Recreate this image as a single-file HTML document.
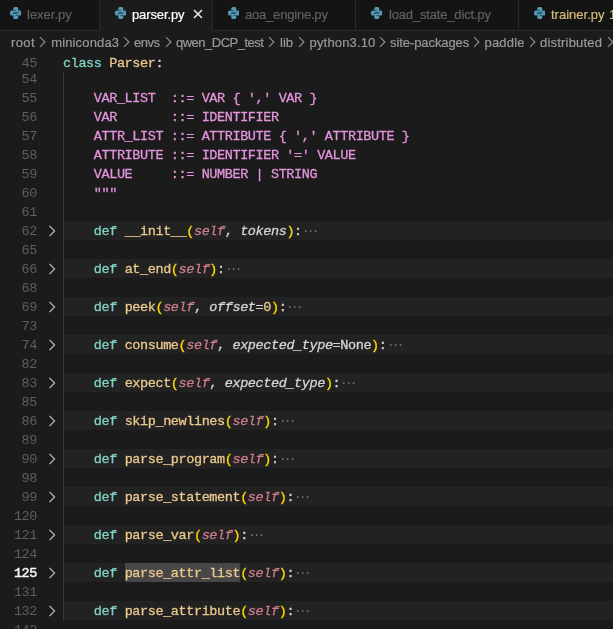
<!DOCTYPE html>
<html><head><meta charset="utf-8">
<style>
html,body{margin:0;padding:0}
body{width:613px;height:629px;overflow:hidden;position:relative;background:#1b1b1b;font-family:"Liberation Sans",sans-serif}
.a{position:absolute;white-space:pre}
#tabs{position:absolute;left:0;top:0;width:613px;height:30px;background:#141414;border-bottom:1px solid #2a2a2a}
.tab{position:absolute;top:0;height:30px;background:#141414;border-right:1px solid #2a2a2a}
.tab.act{background:#1b1b1b;height:31px}
.tl{-webkit-text-stroke:0.2px currentColor;position:absolute;top:7px;font-size:13px;line-height:16px;color:#606060;white-space:pre}
.act .tl{color:#ffffff}
.ic{position:absolute;top:7px;width:11.5px;height:12px}
.bc{-webkit-text-stroke:0.2px currentColor;position:absolute;top:35px;font-size:13px;line-height:16px;color:#999999;white-space:pre}
.sep{position:absolute;top:36px;width:7px;height:12px}
.ln{margin-top:1px;position:absolute;left:0;width:37px;text-align:right;font-family:"Liberation Mono",monospace;font-size:13.5px;line-height:19px;color:#5e5e5e;letter-spacing:-0.4px}
.code{margin-top:1px;-webkit-text-stroke:0.3px currentColor;position:absolute;left:63px;font-family:"Liberation Mono",monospace;font-size:13.5px;line-height:19px;color:#d4d4d4;white-space:pre;letter-spacing:-0.4px}
.fold{position:absolute;left:63px;width:550px;height:19px;background:#222222}
.chev{position:absolute;left:48px;width:8px;height:19px}
.k{color:#80d3c3}
.f{color:#ebc88d}
.s{color:#e394dc}
.sl{color:#cc7c8a;font-style:italic}
.p{color:#d4d4d4;font-style:italic}
.b{color:#ffd700}
.n{color:#ebc88d}
.e{color:#8b8b8b}
.dots{display:inline-block;width:16px;height:19px;vertical-align:top;fill:#8e8e8e}
.hl{background:#3a3a3a}
.ln.act{color:#f4f4f4;-webkit-text-stroke:0.5px #f4f4f4}
</style></head>
<body>
<div id="root" style="position:absolute;left:0;top:0;width:613px;height:629px;will-change:transform">
<div id="tabs">
  <div class="tab" style="left:-5px;width:104px">
    <svg class="ic" style="left:14.7px" viewBox="0 0 12 12" preserveAspectRatio="none"><g fill="#519aba">
      <path d="M5 0H7Q8.6 0 8.6 1.6V4.4Q8.6 5.6 7.4 5.6H4.6Q3.4 5.6 3.4 6.8V8.6H1.9Q0 8.6 0 6.7V5.3Q0 3.4 1.9 3.4H6.2V3H3.4V1.6Q3.4 0 5 0Z"/>
      <path d="M7 12H5Q3.4 12 3.4 10.4V7.6Q3.4 6.4 4.6 6.4H7.4Q8.6 6.4 8.6 5.2V3.4H10.1Q12 3.4 12 5.3V6.7Q12 8.6 10.1 8.6H5.8V9H8.6V10.4Q8.6 12 7 12Z"/>
    </g></svg>
    <div class="tl" style="left:32px">lexer.py</div>
  </div>
  <div class="tab act" style="left:100px;width:112px">
    <svg class="ic" style="left:14.7px" viewBox="0 0 12 12" preserveAspectRatio="none"><g fill="#519aba">
      <path d="M5 0H7Q8.6 0 8.6 1.6V4.4Q8.6 5.6 7.4 5.6H4.6Q3.4 5.6 3.4 6.8V8.6H1.9Q0 8.6 0 6.7V5.3Q0 3.4 1.9 3.4H6.2V3H3.4V1.6Q3.4 0 5 0Z"/>
      <path d="M7 12H5Q3.4 12 3.4 10.4V7.6Q3.4 6.4 4.6 6.4H7.4Q8.6 6.4 8.6 5.2V3.4H10.1Q12 3.4 12 5.3V6.7Q12 8.6 10.1 8.6H5.8V9H8.6V10.4Q8.6 12 7 12Z"/>
    </g></svg>
    <div class="tl" style="left:32px;letter-spacing:-0.12px">parser.py</div>
    <svg style="position:absolute;left:93px;top:9px" width="10" height="10" viewBox="0 0 10 10"><path d="M1 1L9 9M9 1L1 9" stroke="#ececec" stroke-width="1.5"/></svg>
  </div>
  <div class="tab" style="left:213px;width:142px">
    <svg class="ic" style="left:14.7px" viewBox="0 0 12 12" preserveAspectRatio="none"><g fill="#519aba">
      <path d="M5 0H7Q8.6 0 8.6 1.6V4.4Q8.6 5.6 7.4 5.6H4.6Q3.4 5.6 3.4 6.8V8.6H1.9Q0 8.6 0 6.7V5.3Q0 3.4 1.9 3.4H6.2V3H3.4V1.6Q3.4 0 5 0Z"/>
      <path d="M7 12H5Q3.4 12 3.4 10.4V7.6Q3.4 6.4 4.6 6.4H7.4Q8.6 6.4 8.6 5.2V3.4H10.1Q12 3.4 12 5.3V6.7Q12 8.6 10.1 8.6H5.8V9H8.6V10.4Q8.6 12 7 12Z"/>
    </g></svg>
    <div class="tl" style="left:32px;letter-spacing:-0.2px">aoa_engine.py</div>
  </div>
  <div class="tab" style="left:356px;width:162px">
    <svg class="ic" style="left:14.7px" viewBox="0 0 12 12" preserveAspectRatio="none"><g fill="#519aba">
      <path d="M5 0H7Q8.6 0 8.6 1.6V4.4Q8.6 5.6 7.4 5.6H4.6Q3.4 5.6 3.4 6.8V8.6H1.9Q0 8.6 0 6.7V5.3Q0 3.4 1.9 3.4H6.2V3H3.4V1.6Q3.4 0 5 0Z"/>
      <path d="M7 12H5Q3.4 12 3.4 10.4V7.6Q3.4 6.4 4.6 6.4H7.4Q8.6 6.4 8.6 5.2V3.4H10.1Q12 3.4 12 5.3V6.7Q12 8.6 10.1 8.6H5.8V9H8.6V10.4Q8.6 12 7 12Z"/>
    </g></svg>
    <div class="tl" style="left:33px;letter-spacing:-0.17px">load_state_dict.py</div>
  </div>
  <div class="tab" style="left:519px;width:120px">
    <svg class="ic" style="left:14.7px" viewBox="0 0 12 12" preserveAspectRatio="none"><g fill="#519aba">
      <path d="M5 0H7Q8.6 0 8.6 1.6V4.4Q8.6 5.6 7.4 5.6H4.6Q3.4 5.6 3.4 6.8V8.6H1.9Q0 8.6 0 6.7V5.3Q0 3.4 1.9 3.4H6.2V3H3.4V1.6Q3.4 0 5 0Z"/>
      <path d="M7 12H5Q3.4 12 3.4 10.4V7.6Q3.4 6.4 4.6 6.4H7.4Q8.6 6.4 8.6 5.2V3.4H10.1Q12 3.4 12 5.3V6.7Q12 8.6 10.1 8.6H5.8V9H8.6V10.4Q8.6 12 7 12Z"/>
    </g></svg>
    <div class="tl" style="left:32px;color:#d7ba7d">trainer.py</div>
    <div class="tl" style="left:90px;color:#d7ba7d">1</div>
  </div>
</div>

<div class="bc" style="left:11px;letter-spacing:0.4px">root</div>
<div class="bc" style="left:51.2px;letter-spacing:0.15px">miniconda3</div>
<div class="bc" style="left:134px;letter-spacing:-0.5px">envs</div>
<div class="bc" style="left:176px;letter-spacing:-0.5px">qwen_DCP_test</div>
<div class="bc" style="left:280px">lib</div>
<div class="bc" style="left:309.6px;letter-spacing:0.15px">python3.10</div>
<div class="bc" style="left:390px;letter-spacing:-0.08px">site-packages</div>
<div class="bc" style="left:484.5px;letter-spacing:0.2px">paddle</div>
<div class="bc" style="left:540px;letter-spacing:0.2px">distributed</div>

<svg class="sep" style="left:39.2px" viewBox="0 0 7 12"><path d="M1 1.1L5.9 6L1 10.9" fill="none" stroke="#8e8e8e" stroke-width="1.2"/></svg>
<svg class="sep" style="left:122.7px" viewBox="0 0 7 12"><path d="M1 1.1L5.9 6L1 10.9" fill="none" stroke="#8e8e8e" stroke-width="1.2"/></svg>
<svg class="sep" style="left:164.7px" viewBox="0 0 7 12"><path d="M1 1.1L5.9 6L1 10.9" fill="none" stroke="#8e8e8e" stroke-width="1.2"/></svg>
<svg class="sep" style="left:268.2px" viewBox="0 0 7 12"><path d="M1 1.1L5.9 6L1 10.9" fill="none" stroke="#8e8e8e" stroke-width="1.2"/></svg>
<svg class="sep" style="left:297.7px" viewBox="0 0 7 12"><path d="M1 1.1L5.9 6L1 10.9" fill="none" stroke="#8e8e8e" stroke-width="1.2"/></svg>
<svg class="sep" style="left:378.7px" viewBox="0 0 7 12"><path d="M1 1.1L5.9 6L1 10.9" fill="none" stroke="#8e8e8e" stroke-width="1.2"/></svg>
<svg class="sep" style="left:472.7px" viewBox="0 0 7 12"><path d="M1 1.1L5.9 6L1 10.9" fill="none" stroke="#8e8e8e" stroke-width="1.2"/></svg>
<svg class="sep" style="left:529px" viewBox="0 0 7 12"><path d="M1 1.1L5.9 6L1 10.9" fill="none" stroke="#8e8e8e" stroke-width="1.2"/></svg>
<svg class="sep" style="left:606.7px" viewBox="0 0 7 12"><path d="M1 1.1L5.9 6L1 10.9" fill="none" stroke="#8e8e8e" stroke-width="1.2"/></svg>
<div id="ed">
<div class="ln" style="top:53px">45</div>
<div class="code" style="top:53px"><span class="k">class</span> <span class="f">Parser</span>:</div>
<div class="ln" style="top:69px">54</div>
<div class="ln" style="top:88px">55</div>
<div class="code" style="top:88px">    <span class="s">VAR_LIST  ::= VAR { ',' VAR }</span></div>
<div class="ln" style="top:107px">56</div>
<div class="code" style="top:107px">    <span class="s">VAR       ::= IDENTIFIER</span></div>
<div class="ln" style="top:126px">57</div>
<div class="code" style="top:126px">    <span class="s">ATTR_LIST ::= ATTRIBUTE { ',' ATTRIBUTE }</span></div>
<div class="ln" style="top:145px">58</div>
<div class="code" style="top:145px">    <span class="s">ATTRIBUTE ::= IDENTIFIER '=' VALUE</span></div>
<div class="ln" style="top:164px">59</div>
<div class="code" style="top:164px">    <span class="s">VALUE     ::= NUMBER | STRING</span></div>
<div class="ln" style="top:183px">60</div>
<div class="code" style="top:183px">    <span class="s">"""</span></div>
<div class="ln" style="top:202px">61</div>
<div class="fold" style="top:221px"></div>
<svg class="chev" style="top:221px" viewBox="0 0 8 19"><path d="M1.5 4.8L6.6 10L1.5 15.2" fill="none" stroke="#c0c0c0" stroke-width="1.15"/></svg>
<div class="ln" style="top:221px">62</div>
<div class="code" style="top:221px">    <span class="k">def</span> <span class="f">__init__</span><span class="b">(</span><span class="sl">self</span>, <span class="p">tokens</span><span class="b">)</span>:<svg class="dots" viewBox="0 0 16 19"><circle cx="3.8" cy="9" r="0.85"/><circle cx="8.7" cy="9" r="0.85"/><circle cx="13.6" cy="9" r="0.85"/></svg></div>
<div class="ln" style="top:240px">65</div>
<div class="fold" style="top:259px"></div>
<svg class="chev" style="top:259px" viewBox="0 0 8 19"><path d="M1.5 4.8L6.6 10L1.5 15.2" fill="none" stroke="#c0c0c0" stroke-width="1.15"/></svg>
<div class="ln" style="top:259px">66</div>
<div class="code" style="top:259px">    <span class="k">def</span> <span class="f">at_end</span><span class="b">(</span><span class="sl">self</span><span class="b">)</span>:<svg class="dots" viewBox="0 0 16 19"><circle cx="3.8" cy="9" r="0.85"/><circle cx="8.7" cy="9" r="0.85"/><circle cx="13.6" cy="9" r="0.85"/></svg></div>
<div class="ln" style="top:278px">68</div>
<div class="fold" style="top:297px"></div>
<svg class="chev" style="top:297px" viewBox="0 0 8 19"><path d="M1.5 4.8L6.6 10L1.5 15.2" fill="none" stroke="#c0c0c0" stroke-width="1.15"/></svg>
<div class="ln" style="top:297px">69</div>
<div class="code" style="top:297px">    <span class="k">def</span> <span class="f">peek</span><span class="b">(</span><span class="sl">self</span>, <span class="p">offset</span>=<span class="n">0</span><span class="b">)</span>:<svg class="dots" viewBox="0 0 16 19"><circle cx="3.8" cy="9" r="0.85"/><circle cx="8.7" cy="9" r="0.85"/><circle cx="13.6" cy="9" r="0.85"/></svg></div>
<div class="ln" style="top:316px">73</div>
<div class="fold" style="top:335px"></div>
<svg class="chev" style="top:335px" viewBox="0 0 8 19"><path d="M1.5 4.8L6.6 10L1.5 15.2" fill="none" stroke="#c0c0c0" stroke-width="1.15"/></svg>
<div class="ln" style="top:335px">74</div>
<div class="code" style="top:335px">    <span class="k">def</span> <span class="f">consume</span><span class="b">(</span><span class="sl">self</span>, <span class="p">expected_type</span>=None<span class="b">)</span>:<svg class="dots" viewBox="0 0 16 19"><circle cx="3.8" cy="9" r="0.85"/><circle cx="8.7" cy="9" r="0.85"/><circle cx="13.6" cy="9" r="0.85"/></svg></div>
<div class="ln" style="top:354px">82</div>
<div class="fold" style="top:373px"></div>
<svg class="chev" style="top:373px" viewBox="0 0 8 19"><path d="M1.5 4.8L6.6 10L1.5 15.2" fill="none" stroke="#c0c0c0" stroke-width="1.15"/></svg>
<div class="ln" style="top:373px">83</div>
<div class="code" style="top:373px">    <span class="k">def</span> <span class="f">expect</span><span class="b">(</span><span class="sl">self</span>, <span class="p">expected_type</span><span class="b">)</span>:<svg class="dots" viewBox="0 0 16 19"><circle cx="3.8" cy="9" r="0.85"/><circle cx="8.7" cy="9" r="0.85"/><circle cx="13.6" cy="9" r="0.85"/></svg></div>
<div class="ln" style="top:392px">85</div>
<div class="fold" style="top:411px"></div>
<svg class="chev" style="top:411px" viewBox="0 0 8 19"><path d="M1.5 4.8L6.6 10L1.5 15.2" fill="none" stroke="#c0c0c0" stroke-width="1.15"/></svg>
<div class="ln" style="top:411px">86</div>
<div class="code" style="top:411px">    <span class="k">def</span> <span class="f">skip_newlines</span><span class="b">(</span><span class="sl">self</span><span class="b">)</span>:<svg class="dots" viewBox="0 0 16 19"><circle cx="3.8" cy="9" r="0.85"/><circle cx="8.7" cy="9" r="0.85"/><circle cx="13.6" cy="9" r="0.85"/></svg></div>
<div class="ln" style="top:430px">89</div>
<div class="fold" style="top:449px"></div>
<svg class="chev" style="top:449px" viewBox="0 0 8 19"><path d="M1.5 4.8L6.6 10L1.5 15.2" fill="none" stroke="#c0c0c0" stroke-width="1.15"/></svg>
<div class="ln" style="top:449px">90</div>
<div class="code" style="top:449px">    <span class="k">def</span> <span class="f">parse_program</span><span class="b">(</span><span class="sl">self</span><span class="b">)</span>:<svg class="dots" viewBox="0 0 16 19"><circle cx="3.8" cy="9" r="0.85"/><circle cx="8.7" cy="9" r="0.85"/><circle cx="13.6" cy="9" r="0.85"/></svg></div>
<div class="ln" style="top:468px">98</div>
<div class="fold" style="top:487px"></div>
<svg class="chev" style="top:487px" viewBox="0 0 8 19"><path d="M1.5 4.8L6.6 10L1.5 15.2" fill="none" stroke="#c0c0c0" stroke-width="1.15"/></svg>
<div class="ln" style="top:487px">99</div>
<div class="code" style="top:487px">    <span class="k">def</span> <span class="f">parse_statement</span><span class="b">(</span><span class="sl">self</span><span class="b">)</span>:<svg class="dots" viewBox="0 0 16 19"><circle cx="3.8" cy="9" r="0.85"/><circle cx="8.7" cy="9" r="0.85"/><circle cx="13.6" cy="9" r="0.85"/></svg></div>
<div class="ln" style="top:506px">120</div>
<div class="fold" style="top:525px"></div>
<svg class="chev" style="top:525px" viewBox="0 0 8 19"><path d="M1.5 4.8L6.6 10L1.5 15.2" fill="none" stroke="#c0c0c0" stroke-width="1.15"/></svg>
<div class="ln" style="top:525px">121</div>
<div class="code" style="top:525px">    <span class="k">def</span> <span class="f">parse_var</span><span class="b">(</span><span class="sl">self</span><span class="b">)</span>:<svg class="dots" viewBox="0 0 16 19"><circle cx="3.8" cy="9" r="0.85"/><circle cx="8.7" cy="9" r="0.85"/><circle cx="13.6" cy="9" r="0.85"/></svg></div>
<div class="ln" style="top:544px">124</div>
<div class="fold" style="top:563px"></div>
<div style="position:absolute;left:124.8px;top:563px;width:115.5px;height:19px;background:#474747"></div>
<svg class="chev" style="top:563px" viewBox="0 0 8 19"><path d="M1.5 4.8L6.6 10L1.5 15.2" fill="none" stroke="#c0c0c0" stroke-width="1.15"/></svg>
<div class="ln act" style="top:563px">125</div>
<div class="code" style="top:563px">    <span class="k">def</span> <span class="f">parse_attr_list</span><span class="b">(</span><span class="sl">self</span><span class="b">)</span>:<svg class="dots" viewBox="0 0 16 19"><circle cx="3.8" cy="9" r="0.85"/><circle cx="8.7" cy="9" r="0.85"/><circle cx="13.6" cy="9" r="0.85"/></svg></div>
<div class="ln" style="top:582px">131</div>
<div class="fold" style="top:601px"></div>
<svg class="chev" style="top:601px" viewBox="0 0 8 19"><path d="M1.5 4.8L6.6 10L1.5 15.2" fill="none" stroke="#c0c0c0" stroke-width="1.15"/></svg>
<div class="ln" style="top:601px">132</div>
<div class="code" style="top:601px">    <span class="k">def</span> <span class="f">parse_attribute</span><span class="b">(</span><span class="sl">self</span><span class="b">)</span>:<svg class="dots" viewBox="0 0 16 19"><circle cx="3.8" cy="9" r="0.85"/><circle cx="8.7" cy="9" r="0.85"/><circle cx="13.6" cy="9" r="0.85"/></svg></div>
<div class="ln" style="top:620px">142</div>
<div style="position:absolute;left:63px;top:72px;width:1px;height:548px;background:#3a3a3a"></div>
</div><!--ed-->
</div>
</body></html>
